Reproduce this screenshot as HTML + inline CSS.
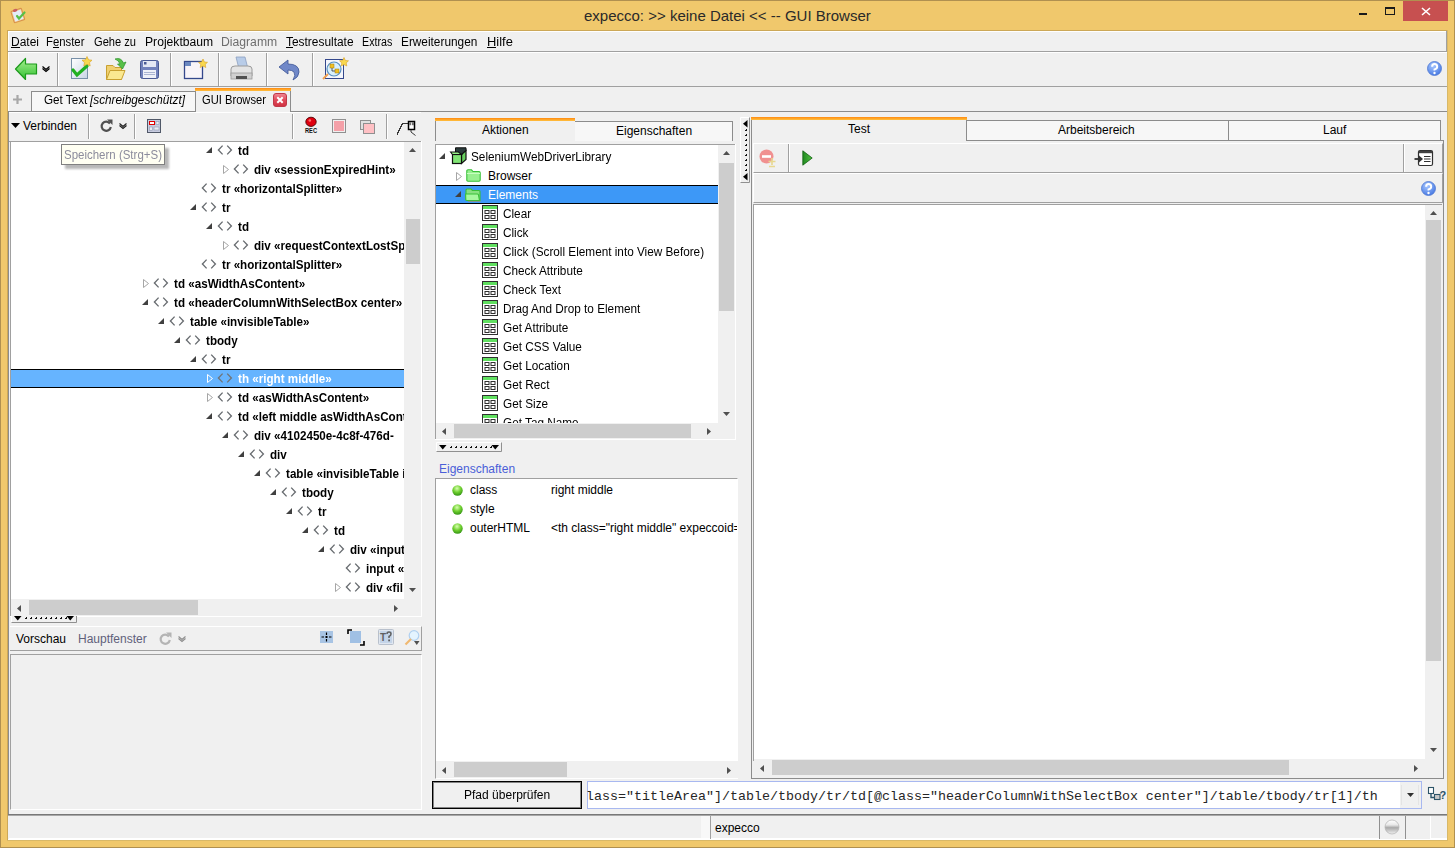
<!DOCTYPE html>
<html><head><meta charset="utf-8"><title>expecco GUI Browser</title>
<style>
html,body{margin:0;padding:0;width:1455px;height:848px;overflow:hidden;background:#f0c86c}
body{position:relative;font-family:"Liberation Sans",sans-serif;font-size:12px;color:#000}
body div, body svg{position:absolute}
.t{white-space:pre}
svg{overflow:visible}
</style></head><body>
<div style="left:0;top:0;width:1455px;height:848px;background:#f0c86c;box-shadow:inset 0 0 0 1px #b09050"></div>
<svg style="left:9px;top:6px;" width="18" height="18" viewBox="0 0 18 18">
<g transform="rotate(-18 9 10)">
<rect x="3.5" y="3.5" width="11" height="12" rx="1" fill="#f0c890" stroke="#d89048" stroke-width="1"/>
<rect x="4.8" y="4.8" width="8.5" height="9.5" fill="#e4ecf8"/>
<ellipse cx="8" cy="3.8" rx="2.3" ry="1.4" fill="#c86060"/>
</g>
<path d="M8 10 L10 12.5 L15.5 6.5" stroke="#58c048" stroke-width="2.2" fill="none" stroke-linecap="round"/>
</svg>
<div class="t" style="left:584px;top:7px;font-size:15px;line-height:18px;color:#2a2a2a">expecco: &gt;&gt; keine Datei &lt;&lt; -- GUI Browser</div>
<div style="left:1359px;top:13px;width:8px;height:2px;background:#1a1a1a"></div>
<div style="left:1385px;top:7px;width:10px;height:8px;box-sizing:border-box;border:1px solid #1a1a1a;border-top-width:2px"></div>
<div style="left:1403px;top:1px;width:45px;height:20px;background:#c75050"></div>
<svg style="left:1421px;top:7px;" width="10" height="9" viewBox="0 0 10 9"><path d="M1 1 L9 8 M9 1 L1 8" stroke="#fff" stroke-width="1.6"/></svg>
<div style="left:8px;top:31px;width:1439px;height:809px;background:#f0f0f0"></div>
<div style="left:7px;top:30px;width:1px;height:811px;background:#cca858"></div>
<div style="left:7px;top:30px;width:1441px;height:1px;background:#cca858"></div>
<div style="left:1447px;top:30px;width:1px;height:811px;background:#d8b868"></div>
<div style="left:7px;top:840px;width:1441px;height:1px;background:#d8b868"></div>
<div style="left:8px;top:31px;width:1px;height:80px;background:#ffffff"></div>
<div style="left:8px;top:111px;width:1px;height:703px;background:#8c8c8c"></div>
<div style="left:8px;top:839px;width:1439px;height:1px;background:#ffffff"></div>
<div style="left:9px;top:31px;width:1438px;height:1px;background:#ffffff"></div>
<div style="left:8px;top:51px;width:1438px;height:1px;background:#a0a0a0"></div>
<div style="left:1446px;top:31px;width:1px;height:21px;background:#a0a0a0"></div>
<div class="t" style="left:11px;top:35px;font-size:12px;line-height:15px;transform:scaleX(0.9994);transform-origin:0 0;color:#000">Datei</div>
<div style="left:11px;top:47px;width:9px;height:1px;background:#000"></div>
<div class="t" style="left:46px;top:35px;font-size:12px;line-height:15px;transform:scaleX(0.9453);transform-origin:0 0;color:#000">Fenster</div>
<div style="left:53px;top:47px;width:6px;height:1px;background:#000"></div>
<div class="t" style="left:94px;top:35px;font-size:12px;line-height:15px;transform:scaleX(0.9268);transform-origin:0 0;color:#000">Gehe zu</div>
<div class="t" style="left:145px;top:35px;font-size:12px;line-height:15px;transform:scaleX(1.0112);transform-origin:0 0;color:#000">Projektbaum</div>
<div class="t" style="left:221px;top:35px;font-size:12px;line-height:15px;transform:scaleX(1.0155);transform-origin:0 0;color:#6d6d6d">Diagramm</div>
<div class="t" style="left:286px;top:35px;font-size:12px;line-height:15px;transform:scaleX(0.9923);transform-origin:0 0;color:#000">Testresultate</div>
<div style="left:286px;top:47px;width:7px;height:1px;background:#000"></div>
<div class="t" style="left:362px;top:35px;font-size:12px;line-height:15px;transform:scaleX(0.8909);transform-origin:0 0;color:#000">Extras</div>
<div class="t" style="left:401px;top:35px;font-size:12px;line-height:15px;transform:scaleX(0.9859);transform-origin:0 0;color:#000">Erweiterungen</div>
<div class="t" style="left:487px;top:35px;font-size:12px;line-height:15px;transform:scaleX(1.0775);transform-origin:0 0;color:#000">Hilfe</div>
<div style="left:487px;top:47px;width:9px;height:1px;background:#000"></div>
<div style="left:9px;top:52px;width:1438px;height:1px;background:#ffffff"></div>
<div style="left:8px;top:86px;width:1439px;height:1px;background:#a0a0a0"></div>
<div style="left:57px;top:53px;width:1px;height:33px;background:#a0a0a0"></div>
<div style="left:58px;top:53px;width:1px;height:33px;background:#ffffff"></div>
<div style="left:170px;top:53px;width:1px;height:33px;background:#a0a0a0"></div>
<div style="left:171px;top:53px;width:1px;height:33px;background:#ffffff"></div>
<div style="left:218px;top:53px;width:1px;height:33px;background:#a0a0a0"></div>
<div style="left:219px;top:53px;width:1px;height:33px;background:#ffffff"></div>
<div style="left:266px;top:53px;width:1px;height:33px;background:#a0a0a0"></div>
<div style="left:267px;top:53px;width:1px;height:33px;background:#ffffff"></div>
<div style="left:312px;top:53px;width:1px;height:33px;background:#a0a0a0"></div>
<div style="left:313px;top:53px;width:1px;height:33px;background:#ffffff"></div>
<svg style="left:14px;top:57px;" width="24" height="24" viewBox="0 0 24 24"><defs><linearGradient id="ga" x1="0" y1="0" x2="0" y2="1"><stop offset="0" stop-color="#a8f090"/><stop offset="1" stop-color="#30c030"/></linearGradient></defs>
<path d="M1.5 12 L11.5 1.5 L11.5 7 L22.5 7 L22.5 17 L11.5 17 L11.5 22.5 Z" fill="url(#ga)" stroke="#1c9a1c" stroke-width="1.2" stroke-linejoin="round"/></svg>
<svg style="left:42px;top:66px;" width="8" height="6" viewBox="0 0 8 6"><path d="M0.5 0.5 L4 3.5 L7.5 0.5 M0.5 2.5 L4 5.5 L7.5 2.5" stroke="#000" stroke-width="1.2" fill="none"/></svg>
<svg style="left:68px;top:56px;" width="26" height="26" viewBox="0 0 26 26"><defs><linearGradient id="gd" x1="0" y1="0" x2="1" y2="1"><stop offset="0" stop-color="#ffffff"/><stop offset="1" stop-color="#c8d4e4"/></linearGradient></defs>
<rect x="3.5" y="2.5" width="16" height="20" fill="url(#gd)" stroke="#7890a8"/>
<path d="M5 14 L9 19 L19 10" stroke="#20b020" stroke-width="3.2" fill="none" stroke-linecap="round"/>
<path d="M19 0.5 L20.6 3.8 L24 4.2 L21.5 6.6 L22.2 10 L19 8.3 L15.8 10 L16.5 6.6 L14 4.2 L17.4 3.8 Z" fill="#f8d850" stroke="#d8a020" stroke-width="0.6"/></svg>
<svg style="left:104px;top:56px;" width="24" height="25" viewBox="0 0 24 25"><path d="M2.5 9.5 L9 9.5 L11 11.5 L17.5 11.5 L17.5 23.5 L2.5 23.5 Z" fill="#f0d070" stroke="#c8a030"/>
<path d="M2.5 23.5 L6 14.5 L21 14.5 L17.5 23.5 Z" fill="#fae890" stroke="#c8a030"/>
<path d="M11 3 Q17 1 19.5 7 L22 6 L18.5 13 L13.5 8 L16 8 Q15 4.5 11 3 Z" fill="#58c048" stroke="#289028" stroke-width="0.7"/></svg>
<svg style="left:139px;top:59px;" width="21" height="21" viewBox="0 0 21 21"><rect x="1.5" y="1.5" width="18" height="18" rx="2" fill="#7282bc" stroke="#4a5a94"/>
<rect x="4" y="2" width="13" height="6" fill="#e4e8f4"/><rect x="5" y="3" width="2.5" height="2.5" fill="#4a5a94"/>
<rect x="4" y="11" width="13" height="8" fill="#eef0f8"/><path d="M5 13.5h11M5 15.5h11" stroke="#98a4c8" stroke-width="0.8"/></svg>
<svg style="left:183px;top:58px;" width="26" height="22" viewBox="0 0 26 22"><rect x="1.5" y="3.5" width="18" height="17" fill="#f8f4f8" stroke="#34488c" stroke-width="1.3"/>
<rect x="2" y="4" width="6" height="4" fill="#6a88c0"/>
<path d="M20 1 L21.4 4 L24.5 4.3 L22.2 6.4 L22.8 9.5 L20 8 L17.2 9.5 L17.8 6.4 L15.5 4.3 L18.6 4 Z" fill="#f8d850" stroke="#d8a020" stroke-width="0.6"/></svg>
<svg style="left:229px;top:56px;" width="25" height="26" viewBox="0 0 25 26"><path d="M7 1 L16 1 L18.5 11 L9.5 11 Z" fill="#b8cce8" stroke="#8ca0c0" stroke-width="0.8"/>
<path d="M2 13 Q2 10 6 10 L19 10 Q23 10 23 13 L23 20 L2 20 Z" fill="#e4e4e4" stroke="#9a9a9a"/>
<rect x="2" y="17" width="21" height="6" fill="#d0d0d0" stroke="#9a9a9a" stroke-width="0.8"/>
<rect x="7" y="20" width="11" height="3" fill="#505050"/></svg>
<svg style="left:278px;top:59px;" width="23" height="22" viewBox="0 0 23 22"><path d="M1 8 L10 1 L10 5 Q21 5 21 13 Q21 18 15 21 Q18 16 16 13 Q14 11 10 11 L10 15 Z" fill="#7088c8" stroke="#3c5494" stroke-width="0.8"/></svg>
<svg style="left:322px;top:57px;" width="28" height="24" viewBox="0 0 28 24"><rect x="3.5" y="2.5" width="18" height="19" fill="#f4f6fc" stroke="#34488c"/>
<circle cx="12" cy="12" r="7" fill="#d8f0fc" stroke="#5890c0" stroke-width="1.2"/>
<rect x="8" y="7" width="4" height="4" fill="#f0c020" stroke="#a07810" stroke-width="0.5"/><rect x="13" y="12" width="4" height="4" fill="#f0c020" stroke="#a07810" stroke-width="0.5"/>
<path d="M10 11 L10 14 L13 14" stroke="#333" stroke-width="0.8" fill="none"/>
<path d="M6 17 L1 22" stroke="#f0a050" stroke-width="2"/>
<path d="M22 0.5 L23.4 3.5 L26.5 3.8 L24.2 5.9 L24.8 9 L22 7.5 L19.2 9 L19.8 5.9 L17.5 3.8 L20.6 3.5 Z" fill="#f8d850" stroke="#d8a020" stroke-width="0.6"/></svg>
<svg style="left:1427px;top:61px;" width="15" height="15" viewBox="0 0 15 15"><defs><radialGradient id="hg1427" cx="0.4" cy="0.3" r="0.8"><stop offset="0" stop-color="#a8c8ff"/><stop offset="1" stop-color="#3c70e0"/></radialGradient></defs>
<circle cx="7.5" cy="7.5" r="7.0" fill="url(#hg1427)" stroke="#5078d0" stroke-width="0.8"/>
<path d="M5.1000000000000005 5.7 Q5.1000000000000005 3.0 7.5 3.0 Q10.200000000000001 3.0 10.200000000000001 5.7 Q10.200000000000001 7.5 7.5 8.4 L7.5 9.6" stroke="#fff" stroke-width="1.9500000000000002" fill="none"/>
<circle cx="7.5" cy="12.0" r="1.2" fill="#fff"/></svg>
<svg style="left:12px;top:94px;" width="11" height="11" viewBox="0 0 11 11"><path d="M5.5 1 V10 M1 5.5 H10" stroke="#a8a8a8" stroke-width="2.2"/></svg>
<div style="left:31px;top:91px;width:165px;height:21px;background:#f7f7f7;box-sizing:border-box;border:1px solid #8c8c8c;border-bottom:none"></div>
<div class="t" style="left:44px;top:93px;font-size:12px;line-height:15px;transform:scaleX(0.9738);transform-origin:0 0;color:#000">Get Text</div>
<div class="t" style="left:90px;top:93px;font-size:12px;line-height:15px;font-style:italic;transform:scaleX(0.9822);transform-origin:0 0">[schreibgeschützt]</div>
<div style="left:8px;top:111px;width:1439px;height:1px;background:#8c8c8c"></div>
<div style="left:195px;top:88px;width:96px;height:24px;background:#f0f0f0;box-sizing:border-box;border-left:1px solid #8c8c8c;border-right:1px solid #8c8c8c"></div>
<div style="left:195px;top:88px;width:96px;height:3px;background:linear-gradient(#ff8a10,#ffc040)"></div>
<div class="t" style="left:202px;top:93px;font-size:12px;line-height:15px;transform:scaleX(0.9310);transform-origin:0 0;color:#000">GUI Browser</div>
<svg style="left:273px;top:93px;" width="14" height="14" viewBox="0 0 14 14"><defs><linearGradient id="gc" x1="0" y1="0" x2="0" y2="1"><stop offset="0" stop-color="#f08a96"/><stop offset="0.5" stop-color="#e04a5a"/><stop offset="1" stop-color="#d03040"/></linearGradient></defs>
<rect x="0.5" y="0.5" width="13" height="13" rx="2.5" fill="url(#gc)" stroke="#c03848"/>
<path d="M4.3 4.3 L9.7 9.7 M9.7 4.3 L4.3 9.7" stroke="#fff" stroke-width="2"/></svg>
<div style="left:9px;top:112px;width:412px;height:1px;background:#ffffff"></div>
<svg style="left:11px;top:123px;" width="9" height="6" viewBox="0 0 9 6"><path d="M0 0 L9 0 L4.5 5 Z" fill="#000"/></svg>
<div class="t" style="left:23px;top:119px;font-size:12px;line-height:15px;color:#000">Verbinden</div>
<div style="left:88px;top:114px;width:1px;height:25px;background:#a0a0a0"></div>
<div style="left:89px;top:114px;width:1px;height:25px;background:#ffffff"></div>
<div style="left:134px;top:114px;width:1px;height:25px;background:#a0a0a0"></div>
<div style="left:135px;top:114px;width:1px;height:25px;background:#ffffff"></div>
<div style="left:292px;top:114px;width:1px;height:25px;background:#a0a0a0"></div>
<div style="left:293px;top:114px;width:1px;height:25px;background:#ffffff"></div>
<div style="left:386px;top:114px;width:1px;height:25px;background:#a0a0a0"></div>
<div style="left:387px;top:114px;width:1px;height:25px;background:#ffffff"></div>
<svg style="left:100px;top:119px;" width="13" height="13" viewBox="0 0 13 13"><path d="M10 4.5 A4.6 4.6 0 1 0 10.8 8" stroke="#505050" stroke-width="2.2" fill="none"/><path d="M7 0.5 L12.5 0.5 L12.5 6 Z" fill="#505050"/></svg>
<svg style="left:119px;top:123px;" width="8" height="6" viewBox="0 0 8 6"><path d="M0.5 0.5 L4 3.5 L7.5 0.5 M0.5 2.5 L4 5.5 L7.5 2.5" stroke="#222" stroke-width="1.2" fill="none"/></svg>
<svg style="left:147px;top:119px;" width="14" height="14" viewBox="0 0 14 14"><rect x="0.5" y="0.5" width="13" height="13" fill="#c8cce0" stroke="#505868"/><rect x="2.5" y="2.5" width="5" height="3" fill="#fff" stroke="#e00000"/><rect x="9" y="2.5" width="3" height="3" fill="#e8ecf4" stroke="#9098b0" stroke-width="0.6"/><rect x="2.5" y="8" width="3" height="3.5" fill="#e8ecf4" stroke="#9098b0" stroke-width="0.6"/><rect x="7" y="8" width="5" height="3" fill="#e8ecf4" stroke="#9098b0" stroke-width="0.6"/></svg>
<svg style="left:303px;top:116px;" width="16" height="19" viewBox="0 0 16 19"><ellipse cx="8" cy="5.8" rx="5.2" ry="4.6" fill="#e00010" stroke="#500000" stroke-width="0.9"/><circle cx="6.8" cy="4.5" r="1.3" fill="#ff7070"/><text x="8" y="17" font-family="Liberation Sans" font-weight="bold" font-size="6.5" text-anchor="middle" fill="#101010" textLength="12" lengthAdjust="spacingAndGlyphs">REC</text></svg>
<svg style="left:332px;top:119px;" width="14" height="14" viewBox="0 0 14 14"><rect x="0.5" y="0.5" width="13" height="13" fill="#f0f0f0" stroke="#909090"/><rect x="2" y="2" width="10" height="10" fill="#f4a0a8"/></svg>
<svg style="left:360px;top:120px;" width="15" height="14" viewBox="0 0 15 14"><rect x="0.5" y="0.5" width="10" height="9" fill="#e0e0e0" stroke="#909090"/><rect x="3.5" y="3.5" width="11" height="10" fill="#ffc0c4" stroke="#909090"/></svg>
<svg style="left:396px;top:120px;" width="21" height="17" viewBox="0 0 21 17"><g shape-rendering="crispEdges" fill="#383838"><rect x="1" y="12" width="1" height="3"/><rect x="1" y="12" width="2" height="1"/><rect x="2" y="10" width="1" height="3"/><rect x="2" y="10" width="2" height="1"/><rect x="3" y="8" width="1" height="2"/><rect x="3" y="8" width="2" height="1"/><rect x="4" y="6" width="1" height="3"/><rect x="4" y="6" width="2" height="1"/><rect x="5" y="4" width="1" height="2"/><rect x="5" y="4" width="2" height="1"/><rect x="6" y="3" width="6" height="1"/></g><rect x="12.5" y="1.5" width="6" height="8" fill="#fff" stroke="#000" stroke-width="1.5"/><rect x="13.2" y="2.2" width="2" height="3" fill="#707070"/><rect x="16" y="2.2" width="2" height="3" fill="#707070"/><path d="M15 10 L15 12 L19.5 15.5" stroke="#383838" fill="none"/></svg>
<div style="left:9px;top:141px;width:412px;height:1px;background:#a0a0a0"></div>
<div style="left:10px;top:141px;width:1px;height:475px;background:#a0a0a0"></div>
<div style="left:11px;top:142px;width:393px;height:457px;background:#fff"></div>
<div style="left:11px;top:142px;width:393px;height:457px;overflow:hidden">
<svg style="left:195px;top:5px;" width="6" height="6" viewBox="0 0 6 6"><path d="M6 0 L6 6 L0 6 Z" fill="#404040"/></svg>
<svg style="left:206px;top:3px;" width="15" height="11" viewBox="0 0 15 11"><path d="M5.6 0.6 L1.4 5 L5.6 9.4 M10.2 0.6 L14.4 5 L10.2 9.4" stroke="#686c70" stroke-width="1.35" fill="none"/></svg>
<div class="t" style="left:227px;top:2px;font-size:12px;line-height:15px;font-weight:bold;color:#000;transform:scaleX(0.97);transform-origin:0 0">td</div>
<svg style="left:212px;top:23px;" width="6" height="9" viewBox="0 0 6 9"><path d="M0.5 0.5 L5.5 4.5 L0.5 8.5 Z" fill="none" stroke="#a6a6a6" stroke-width="1"/></svg>
<svg style="left:222px;top:22px;" width="15" height="11" viewBox="0 0 15 11"><path d="M5.6 0.6 L1.4 5 L5.6 9.4 M10.2 0.6 L14.4 5 L10.2 9.4" stroke="#686c70" stroke-width="1.35" fill="none"/></svg>
<div class="t" style="left:243px;top:21px;font-size:12px;line-height:15px;font-weight:bold;color:#000;transform:scaleX(0.97);transform-origin:0 0">div «sessionExpiredHint»</div>
<svg style="left:190px;top:41px;" width="15" height="11" viewBox="0 0 15 11"><path d="M5.6 0.6 L1.4 5 L5.6 9.4 M10.2 0.6 L14.4 5 L10.2 9.4" stroke="#686c70" stroke-width="1.35" fill="none"/></svg>
<div class="t" style="left:211px;top:40px;font-size:12px;line-height:15px;font-weight:bold;color:#000;transform:scaleX(0.97);transform-origin:0 0">tr «horizontalSplitter»</div>
<svg style="left:179px;top:62px;" width="6" height="6" viewBox="0 0 6 6"><path d="M6 0 L6 6 L0 6 Z" fill="#404040"/></svg>
<svg style="left:190px;top:60px;" width="15" height="11" viewBox="0 0 15 11"><path d="M5.6 0.6 L1.4 5 L5.6 9.4 M10.2 0.6 L14.4 5 L10.2 9.4" stroke="#686c70" stroke-width="1.35" fill="none"/></svg>
<div class="t" style="left:211px;top:59px;font-size:12px;line-height:15px;font-weight:bold;color:#000;transform:scaleX(0.97);transform-origin:0 0">tr</div>
<svg style="left:195px;top:81px;" width="6" height="6" viewBox="0 0 6 6"><path d="M6 0 L6 6 L0 6 Z" fill="#404040"/></svg>
<svg style="left:206px;top:79px;" width="15" height="11" viewBox="0 0 15 11"><path d="M5.6 0.6 L1.4 5 L5.6 9.4 M10.2 0.6 L14.4 5 L10.2 9.4" stroke="#686c70" stroke-width="1.35" fill="none"/></svg>
<div class="t" style="left:227px;top:78px;font-size:12px;line-height:15px;font-weight:bold;color:#000;transform:scaleX(0.97);transform-origin:0 0">td</div>
<svg style="left:212px;top:99px;" width="6" height="9" viewBox="0 0 6 9"><path d="M0.5 0.5 L5.5 4.5 L0.5 8.5 Z" fill="none" stroke="#a6a6a6" stroke-width="1"/></svg>
<svg style="left:222px;top:98px;" width="15" height="11" viewBox="0 0 15 11"><path d="M5.6 0.6 L1.4 5 L5.6 9.4 M10.2 0.6 L14.4 5 L10.2 9.4" stroke="#686c70" stroke-width="1.35" fill="none"/></svg>
<div class="t" style="left:243px;top:97px;font-size:12px;line-height:15px;font-weight:bold;color:#000;transform:scaleX(0.97);transform-origin:0 0">div «requestContextLostSpacer»</div>
<svg style="left:190px;top:117px;" width="15" height="11" viewBox="0 0 15 11"><path d="M5.6 0.6 L1.4 5 L5.6 9.4 M10.2 0.6 L14.4 5 L10.2 9.4" stroke="#686c70" stroke-width="1.35" fill="none"/></svg>
<div class="t" style="left:211px;top:116px;font-size:12px;line-height:15px;font-weight:bold;color:#000;transform:scaleX(0.97);transform-origin:0 0">tr «horizontalSplitter»</div>
<svg style="left:132px;top:137px;" width="6" height="9" viewBox="0 0 6 9"><path d="M0.5 0.5 L5.5 4.5 L0.5 8.5 Z" fill="none" stroke="#a6a6a6" stroke-width="1"/></svg>
<svg style="left:142px;top:136px;" width="15" height="11" viewBox="0 0 15 11"><path d="M5.6 0.6 L1.4 5 L5.6 9.4 M10.2 0.6 L14.4 5 L10.2 9.4" stroke="#686c70" stroke-width="1.35" fill="none"/></svg>
<div class="t" style="left:163px;top:135px;font-size:12px;line-height:15px;font-weight:bold;color:#000;transform:scaleX(0.97);transform-origin:0 0">td «asWidthAsContent»</div>
<svg style="left:131px;top:157px;" width="6" height="6" viewBox="0 0 6 6"><path d="M6 0 L6 6 L0 6 Z" fill="#404040"/></svg>
<svg style="left:142px;top:155px;" width="15" height="11" viewBox="0 0 15 11"><path d="M5.6 0.6 L1.4 5 L5.6 9.4 M10.2 0.6 L14.4 5 L10.2 9.4" stroke="#686c70" stroke-width="1.35" fill="none"/></svg>
<div class="t" style="left:163px;top:154px;font-size:12px;line-height:15px;font-weight:bold;color:#000;transform:scaleX(0.97);transform-origin:0 0">td «headerColumnWithSelectBox center»</div>
<svg style="left:147px;top:176px;" width="6" height="6" viewBox="0 0 6 6"><path d="M6 0 L6 6 L0 6 Z" fill="#404040"/></svg>
<svg style="left:158px;top:174px;" width="15" height="11" viewBox="0 0 15 11"><path d="M5.6 0.6 L1.4 5 L5.6 9.4 M10.2 0.6 L14.4 5 L10.2 9.4" stroke="#686c70" stroke-width="1.35" fill="none"/></svg>
<div class="t" style="left:179px;top:173px;font-size:12px;line-height:15px;font-weight:bold;color:#000;transform:scaleX(0.97);transform-origin:0 0">table «invisibleTable»</div>
<svg style="left:163px;top:195px;" width="6" height="6" viewBox="0 0 6 6"><path d="M6 0 L6 6 L0 6 Z" fill="#404040"/></svg>
<svg style="left:174px;top:193px;" width="15" height="11" viewBox="0 0 15 11"><path d="M5.6 0.6 L1.4 5 L5.6 9.4 M10.2 0.6 L14.4 5 L10.2 9.4" stroke="#686c70" stroke-width="1.35" fill="none"/></svg>
<div class="t" style="left:195px;top:192px;font-size:12px;line-height:15px;font-weight:bold;color:#000;transform:scaleX(0.97);transform-origin:0 0">tbody</div>
<svg style="left:179px;top:214px;" width="6" height="6" viewBox="0 0 6 6"><path d="M6 0 L6 6 L0 6 Z" fill="#404040"/></svg>
<svg style="left:190px;top:212px;" width="15" height="11" viewBox="0 0 15 11"><path d="M5.6 0.6 L1.4 5 L5.6 9.4 M10.2 0.6 L14.4 5 L10.2 9.4" stroke="#686c70" stroke-width="1.35" fill="none"/></svg>
<div class="t" style="left:211px;top:211px;font-size:12px;line-height:15px;font-weight:bold;color:#000;transform:scaleX(0.97);transform-origin:0 0">tr</div>
<div style="left:0px;top:227px;width:393px;height:19px;background:#66b4ff;box-sizing:border-box;border-top:1px solid #000;border-bottom:1px solid #000"></div>
<svg style="left:196px;top:232px;" width="6" height="9" viewBox="0 0 6 9"><path d="M0.5 0.5 L5.5 4.5 L0.5 8.5 Z" fill="none" stroke="#ffffff" stroke-width="1"/></svg>
<svg style="left:206px;top:231px;" width="15" height="11" viewBox="0 0 15 11"><path d="M5.6 0.6 L1.4 5 L5.6 9.4 M10.2 0.6 L14.4 5 L10.2 9.4" stroke="#707478" stroke-width="1.35" fill="none"/></svg>
<div class="t" style="left:227px;top:230px;font-size:12px;line-height:15px;font-weight:bold;color:#fff;transform:scaleX(0.97);transform-origin:0 0">th «right middle»</div>
<svg style="left:196px;top:251px;" width="6" height="9" viewBox="0 0 6 9"><path d="M0.5 0.5 L5.5 4.5 L0.5 8.5 Z" fill="none" stroke="#a6a6a6" stroke-width="1"/></svg>
<svg style="left:206px;top:250px;" width="15" height="11" viewBox="0 0 15 11"><path d="M5.6 0.6 L1.4 5 L5.6 9.4 M10.2 0.6 L14.4 5 L10.2 9.4" stroke="#686c70" stroke-width="1.35" fill="none"/></svg>
<div class="t" style="left:227px;top:249px;font-size:12px;line-height:15px;font-weight:bold;color:#000;transform:scaleX(0.97);transform-origin:0 0">td «asWidthAsContent»</div>
<svg style="left:195px;top:271px;" width="6" height="6" viewBox="0 0 6 6"><path d="M6 0 L6 6 L0 6 Z" fill="#404040"/></svg>
<svg style="left:206px;top:269px;" width="15" height="11" viewBox="0 0 15 11"><path d="M5.6 0.6 L1.4 5 L5.6 9.4 M10.2 0.6 L14.4 5 L10.2 9.4" stroke="#686c70" stroke-width="1.35" fill="none"/></svg>
<div class="t" style="left:227px;top:268px;font-size:12px;line-height:15px;font-weight:bold;color:#000;transform:scaleX(0.97);transform-origin:0 0">td «left middle asWidthAsContent»</div>
<svg style="left:211px;top:290px;" width="6" height="6" viewBox="0 0 6 6"><path d="M6 0 L6 6 L0 6 Z" fill="#404040"/></svg>
<svg style="left:222px;top:288px;" width="15" height="11" viewBox="0 0 15 11"><path d="M5.6 0.6 L1.4 5 L5.6 9.4 M10.2 0.6 L14.4 5 L10.2 9.4" stroke="#686c70" stroke-width="1.35" fill="none"/></svg>
<div class="t" style="left:243px;top:287px;font-size:12px;line-height:15px;font-weight:bold;color:#000;transform:scaleX(0.97);transform-origin:0 0">div «4102450e-4c8f-476d-</div>
<svg style="left:227px;top:309px;" width="6" height="6" viewBox="0 0 6 6"><path d="M6 0 L6 6 L0 6 Z" fill="#404040"/></svg>
<svg style="left:238px;top:307px;" width="15" height="11" viewBox="0 0 15 11"><path d="M5.6 0.6 L1.4 5 L5.6 9.4 M10.2 0.6 L14.4 5 L10.2 9.4" stroke="#686c70" stroke-width="1.35" fill="none"/></svg>
<div class="t" style="left:259px;top:306px;font-size:12px;line-height:15px;font-weight:bold;color:#000;transform:scaleX(0.97);transform-origin:0 0">div</div>
<svg style="left:243px;top:328px;" width="6" height="6" viewBox="0 0 6 6"><path d="M6 0 L6 6 L0 6 Z" fill="#404040"/></svg>
<svg style="left:254px;top:326px;" width="15" height="11" viewBox="0 0 15 11"><path d="M5.6 0.6 L1.4 5 L5.6 9.4 M10.2 0.6 L14.4 5 L10.2 9.4" stroke="#686c70" stroke-width="1.35" fill="none"/></svg>
<div class="t" style="left:275px;top:325px;font-size:12px;line-height:15px;font-weight:bold;color:#000;transform:scaleX(0.97);transform-origin:0 0">table «invisibleTable inputTable»</div>
<svg style="left:259px;top:347px;" width="6" height="6" viewBox="0 0 6 6"><path d="M6 0 L6 6 L0 6 Z" fill="#404040"/></svg>
<svg style="left:270px;top:345px;" width="15" height="11" viewBox="0 0 15 11"><path d="M5.6 0.6 L1.4 5 L5.6 9.4 M10.2 0.6 L14.4 5 L10.2 9.4" stroke="#686c70" stroke-width="1.35" fill="none"/></svg>
<div class="t" style="left:291px;top:344px;font-size:12px;line-height:15px;font-weight:bold;color:#000;transform:scaleX(0.97);transform-origin:0 0">tbody</div>
<svg style="left:275px;top:366px;" width="6" height="6" viewBox="0 0 6 6"><path d="M6 0 L6 6 L0 6 Z" fill="#404040"/></svg>
<svg style="left:286px;top:364px;" width="15" height="11" viewBox="0 0 15 11"><path d="M5.6 0.6 L1.4 5 L5.6 9.4 M10.2 0.6 L14.4 5 L10.2 9.4" stroke="#686c70" stroke-width="1.35" fill="none"/></svg>
<div class="t" style="left:307px;top:363px;font-size:12px;line-height:15px;font-weight:bold;color:#000;transform:scaleX(0.97);transform-origin:0 0">tr</div>
<svg style="left:291px;top:385px;" width="6" height="6" viewBox="0 0 6 6"><path d="M6 0 L6 6 L0 6 Z" fill="#404040"/></svg>
<svg style="left:302px;top:383px;" width="15" height="11" viewBox="0 0 15 11"><path d="M5.6 0.6 L1.4 5 L5.6 9.4 M10.2 0.6 L14.4 5 L10.2 9.4" stroke="#686c70" stroke-width="1.35" fill="none"/></svg>
<div class="t" style="left:323px;top:382px;font-size:12px;line-height:15px;font-weight:bold;color:#000;transform:scaleX(0.97);transform-origin:0 0">td</div>
<svg style="left:307px;top:404px;" width="6" height="6" viewBox="0 0 6 6"><path d="M6 0 L6 6 L0 6 Z" fill="#404040"/></svg>
<svg style="left:318px;top:402px;" width="15" height="11" viewBox="0 0 15 11"><path d="M5.6 0.6 L1.4 5 L5.6 9.4 M10.2 0.6 L14.4 5 L10.2 9.4" stroke="#686c70" stroke-width="1.35" fill="none"/></svg>
<div class="t" style="left:339px;top:401px;font-size:12px;line-height:15px;font-weight:bold;color:#000;transform:scaleX(0.97);transform-origin:0 0">div «inputField»</div>
<svg style="left:334px;top:421px;" width="15" height="11" viewBox="0 0 15 11"><path d="M5.6 0.6 L1.4 5 L5.6 9.4 M10.2 0.6 L14.4 5 L10.2 9.4" stroke="#686c70" stroke-width="1.35" fill="none"/></svg>
<div class="t" style="left:355px;top:420px;font-size:12px;line-height:15px;font-weight:bold;color:#000;transform:scaleX(0.97);transform-origin:0 0">input «inputFieldText»</div>
<svg style="left:324px;top:441px;" width="6" height="9" viewBox="0 0 6 9"><path d="M0.5 0.5 L5.5 4.5 L0.5 8.5 Z" fill="none" stroke="#a6a6a6" stroke-width="1"/></svg>
<svg style="left:334px;top:440px;" width="15" height="11" viewBox="0 0 15 11"><path d="M5.6 0.6 L1.4 5 L5.6 9.4 M10.2 0.6 L14.4 5 L10.2 9.4" stroke="#686c70" stroke-width="1.35" fill="none"/></svg>
<div class="t" style="left:355px;top:439px;font-size:12px;line-height:15px;font-weight:bold;color:#000;transform:scaleX(0.97);transform-origin:0 0">div «fil</div>
</div>
<div style="left:405px;top:142px;width:16px;height:457px;background:#f0f0f0"></div>
<div style="left:406px;top:219px;width:14px;height:45px;background:#cdcdcd"></div>
<svg style="left:409px;top:148px;" width="7" height="4" viewBox="0 0 7 4"><path d="M0 4 L3.5 0 L7 4 Z" fill="#505050"/></svg>
<svg style="left:409px;top:588px;" width="7" height="4" viewBox="0 0 7 4"><path d="M0 0 L7 0 L3.5 4 Z" fill="#505050"/></svg>
<div style="left:11px;top:599px;width:394px;height:17px;background:#f0f0f0"></div>
<div style="left:29px;top:600px;width:169px;height:15px;background:#cdcdcd"></div>
<svg style="left:17px;top:605px;" width="4" height="7" viewBox="0 0 4 7"><path d="M4 0 L4 7 L0 3.5 Z" fill="#505050"/></svg>
<svg style="left:394px;top:605px;" width="4" height="7" viewBox="0 0 4 7"><path d="M0 0 L4 3.5 L0 7 Z" fill="#505050"/></svg>
<div style="left:405px;top:599px;width:16px;height:17px;background:#f0f0f0"></div>
<div style="left:421px;top:141px;width:1px;height:476px;background:#ffffff"></div>
<div style="left:10px;top:616px;width:412px;height:1px;background:#ffffff"></div>
<div style="left:65px;top:148px;width:104px;height:21px;background:rgba(0,0,0,0.28);filter:blur(1px)"></div>
<div style="left:61px;top:144px;width:104px;height:21px;background:#fffff2;box-sizing:border-box;border:1px solid #808080"></div>
<div class="t" style="left:64px;top:148px;font-size:12px;line-height:15px;transform:scaleX(0.9568);transform-origin:0 0;color:#8c8c9c">Speichern (Strg+S)</div>
<svg style="left:11px;top:613px;clip-path:inset(3px 0 0 0)" width="66" height="10" viewBox="0 0 66 10"><rect x="0" y="0" width="66" height="10" fill="#f0f0f0"/><path d="M0.5 9.5 V0.5 H65.5" stroke="#ffffff" fill="none"/><path d="M0.5 9.5 H65.5 V0.5" stroke="#909090" fill="none"/><path d="M16 4 V6 H14" fill="#111" stroke="none"/><rect x="14" y="5" width="2" height="1" fill="#111"/><rect x="15" y="4" width="1" height="1" fill="#111"/><path d="M21 4 V6 H19" fill="#111" stroke="none"/><rect x="19" y="5" width="2" height="1" fill="#111"/><rect x="20" y="4" width="1" height="1" fill="#111"/><path d="M26 4 V6 H24" fill="#111" stroke="none"/><rect x="24" y="5" width="2" height="1" fill="#111"/><rect x="25" y="4" width="1" height="1" fill="#111"/><path d="M31 4 V6 H29" fill="#111" stroke="none"/><rect x="29" y="5" width="2" height="1" fill="#111"/><rect x="30" y="4" width="1" height="1" fill="#111"/><path d="M36 4 V6 H34" fill="#111" stroke="none"/><rect x="34" y="5" width="2" height="1" fill="#111"/><rect x="35" y="4" width="1" height="1" fill="#111"/><path d="M41 4 V6 H39" fill="#111" stroke="none"/><rect x="39" y="5" width="2" height="1" fill="#111"/><rect x="40" y="4" width="1" height="1" fill="#111"/><path d="M46 4 V6 H44" fill="#111" stroke="none"/><rect x="44" y="5" width="2" height="1" fill="#111"/><rect x="45" y="4" width="1" height="1" fill="#111"/><path d="M51 4 V6 H49" fill="#111" stroke="none"/><rect x="49" y="5" width="2" height="1" fill="#111"/><rect x="50" y="4" width="1" height="1" fill="#111"/><path d="M56 4 V6 H54" fill="#111" stroke="none"/><rect x="54" y="5" width="2" height="1" fill="#111"/><rect x="55" y="4" width="1" height="1" fill="#111"/><path d="M3 3 L10.5 3 L6.75 7.5 Z" fill="#000"/><path d="M55.5 3 L63 3 L59.25 7.5 Z" fill="#000"/></svg>
<div style="left:10px;top:626px;width:412px;height:25px;box-sizing:border-box;border-top:1px solid #fff;border-right:1px solid #a0a0a0;border-bottom:1px solid #a0a0a0"></div>
<div class="t" style="left:16px;top:632px;font-size:12px;line-height:15px;color:#000">Vorschau</div>
<div class="t" style="left:78px;top:632px;font-size:12px;line-height:15px;color:#60607a">Hauptfenster</div>
<svg style="left:159px;top:632px;" width="13" height="13" viewBox="0 0 13 13"><path d="M10 4.5 A4.6 4.6 0 1 0 10.8 8" stroke="#b4b4b4" stroke-width="2.2" fill="none"/><path d="M7 0.5 L12.5 0.5 L12.5 6 Z" fill="#b4b4b4"/></svg>
<svg style="left:178px;top:636px;" width="8" height="6" viewBox="0 0 8 6"><path d="M0.5 0.5 L4 3.5 L7.5 0.5 M0.5 2.5 L4 5.5 L7.5 2.5" stroke="#909090" stroke-width="1.2" fill="none"/></svg>
<svg style="left:320px;top:631px;" width="13" height="13" viewBox="0 0 13 13"><rect x="0" y="0" width="13" height="12" fill="#a8c4e4"/><path d="M6.5 1.5 V4 M6.5 8 V10.5 M1.5 6 H4 M9 6 H11.5" stroke="#000" stroke-width="1.2"/><rect x="5.5" y="5" width="2" height="2" fill="#000"/></svg>
<svg style="left:347px;top:629px;" width="18" height="17" viewBox="0 0 18 17"><rect x="3" y="2" width="11" height="12" fill="#a0c0e4"/><path d="M1 5 V1 H5 M13 16 H17 V12" stroke="#000" stroke-width="1.6" fill="none"/></svg>
<svg style="left:378px;top:629px;" width="16" height="16" viewBox="0 0 16 16"><rect x="0.5" y="0.5" width="15" height="15" rx="1" fill="#dfe6f0" stroke="#b8c0cc"/><rect x="2" y="2" width="12" height="12" fill="#c4d4e8"/><text x="2" y="12" font-family="Liberation Sans" font-weight="bold" font-size="10" fill="#606060">T</text><path d="M9 5 Q9 3 11 3 Q13 3 13 5 Q13 6.5 11 7.5 V9" stroke="#606060" stroke-width="1.5" fill="none"/><rect x="10.2" y="10.5" width="1.8" height="1.8" fill="#606060"/></svg>
<svg style="left:404px;top:630px;" width="16" height="16" viewBox="0 0 16 16"><circle cx="10" cy="5.5" r="4.8" fill="#e4f4ff" stroke="#b0d0f0" stroke-width="1.2"/><path d="M7 9 L1.5 14.5" stroke="#f0b870" stroke-width="2.2"/><path d="M10 11 H15.5 L12.75 15 Z" fill="#505050"/></svg>
<div style="left:10px;top:654px;width:412px;height:156px;box-sizing:border-box;border-top:1px solid #a0a0a0;border-left:1px solid #a0a0a0;border-right:1px solid #fff;border-bottom:1px solid #fff"></div>
<div style="left:574px;top:121px;width:159px;height:20px;background:#f7f7f7;box-sizing:border-box;border:1px solid #8c8c8c;border-bottom:none"></div>
<div class="t" style="left:616px;top:124px;font-size:12px;line-height:15px;color:#000">Eigenschaften</div>
<div style="left:435px;top:118px;width:140px;height:23px;background:#f0f0f0;box-sizing:border-box;border-left:1px solid #8c8c8c"></div>
<div style="left:435px;top:118px;width:140px;height:3px;background:linear-gradient(#ff8a10,#ffc040)"></div>
<div class="t" style="left:482px;top:123px;font-size:12px;line-height:15px;color:#000">Aktionen</div>
<div style="left:435px;top:144px;width:301px;height:296px;box-sizing:border-box;border-top:1px solid #a0a0a0;border-left:1px solid #a0a0a0"></div>
<div style="left:436px;top:145px;width:282px;height:278px;background:#fff"></div>
<div style="left:735px;top:144px;width:1px;height:296px;background:#ffffff"></div>
<div style="left:435px;top:439px;width:301px;height:1px;background:#ffffff"></div>
<div style="left:436px;top:145px;width:282px;height:278px;overflow:hidden">
<svg style="left:3px;top:8px;" width="6" height="6" viewBox="0 0 6 6"><path d="M6 0 L6 6 L0 6 Z" fill="#404040"/></svg>
<svg style="left:14px;top:2px;" width="17" height="17" viewBox="0 0 17 17"><path d="M5.5 0.8 L16 0.8 L16 4 L12 7.5 L5.5 7.5 Z" fill="#2c3c3c" stroke="#101010" stroke-width="1"/><path d="M11.5 7.5 L16 3.5 L16 12.5 L11.5 16.5 Z" fill="#68d060" stroke="#101010" stroke-width="1.2"/><rect x="2.5" y="7.5" width="9" height="9" fill="#80e474" stroke="#101010" stroke-width="1.2"/><path d="M0.6 5 L8.5 5 L11.5 7.5 L2.5 7.5 Z" fill="#98f088" stroke="#101010" stroke-width="1.1"/></svg>
<div class="t" style="left:35px;top:5px;font-size:12px;line-height:15px;color:#000;transform:scaleX(0.98);transform-origin:0 0">SeleniumWebDriverLibrary</div>
<svg style="left:20px;top:27px;" width="6" height="9" viewBox="0 0 6 9"><path d="M0.5 0.5 L5.5 4.5 L0.5 8.5 Z" fill="none" stroke="#a6a6a6" stroke-width="1"/></svg>
<svg style="left:30px;top:24px;" width="15" height="13" viewBox="0 0 15 13"><path d="M0.8 2 Q0.8 0.8 2 0.8 L5.5 0.8 L7 2.5 L13 2.5 Q14.2 2.5 14.2 3.7 L14.2 11 Q14.2 12.2 13 12.2 L2 12.2 Q0.8 12.2 0.8 11 Z" fill="#98f090" stroke="#38c038" stroke-width="1.1"/><path d="M1 4.5 H14" stroke="#c8ffc0" stroke-width="1"/></svg>
<div class="t" style="left:52px;top:24px;font-size:12px;line-height:15px;color:#000">Browser</div>
<div style="left:0px;top:40px;width:282px;height:19px;background:#3d98f7;box-sizing:border-box;border-top:1px solid #000;border-bottom:1px solid #000"></div>
<svg style="left:19px;top:46px;" width="6" height="6" viewBox="0 0 6 6"><path d="M6 0 L6 6 L0 6 Z" fill="#404040"/></svg>
<svg style="left:29px;top:43px;" width="17" height="14" viewBox="0 0 17 14"><path d="M1 2 Q1 1 2 1 L6 1 L7.5 2.5 L14 2.5 Q15 2.5 15 3.5 L15 12.5 L2 12.5 Q1 12.5 1 11.5 Z" fill="#88e080" stroke="#38c038" stroke-width="1.1"/><path d="M0.6 6 L12.5 6 Q13.5 6 13.5 7 L14.5 12.5 L2 12.5 Q1 12.5 0.8 11.5 Z" fill="#a8f8a0" stroke="#38c038" stroke-width="1.1"/><path d="M3 13.4 H15.5" stroke="#a09070" stroke-width="0.8"/></svg>
<div class="t" style="left:52px;top:43px;font-size:12px;line-height:15px;color:#fff">Elements</div>
<svg style="left:46px;top:60px;" width="16" height="16" viewBox="0 0 16 16"><rect x="0.5" y="0.5" width="15" height="15" fill="#fff" stroke="#303030"/><rect x="1" y="1" width="14" height="3" fill="#60e060"/><rect x="3" y="5.5" width="4" height="3" fill="none" stroke="#303030"/><rect x="9" y="5.5" width="4" height="3" fill="none" stroke="#303030"/><rect x="3" y="10.5" width="4" height="3" fill="none" stroke="#303030"/><rect x="9" y="10.5" width="4" height="3" fill="none" stroke="#303030"/></svg>
<div class="t" style="left:67px;top:62px;font-size:12px;line-height:15px;color:#000;transform:scaleX(0.98);transform-origin:0 0">Clear</div>
<svg style="left:46px;top:79px;" width="16" height="16" viewBox="0 0 16 16"><rect x="0.5" y="0.5" width="15" height="15" fill="#fff" stroke="#303030"/><rect x="1" y="1" width="14" height="3" fill="#60e060"/><rect x="3" y="5.5" width="4" height="3" fill="none" stroke="#303030"/><rect x="9" y="5.5" width="4" height="3" fill="none" stroke="#303030"/><rect x="3" y="10.5" width="4" height="3" fill="none" stroke="#303030"/><rect x="9" y="10.5" width="4" height="3" fill="none" stroke="#303030"/></svg>
<div class="t" style="left:67px;top:81px;font-size:12px;line-height:15px;color:#000;transform:scaleX(0.98);transform-origin:0 0">Click</div>
<svg style="left:46px;top:98px;" width="16" height="16" viewBox="0 0 16 16"><rect x="0.5" y="0.5" width="15" height="15" fill="#fff" stroke="#303030"/><rect x="1" y="1" width="14" height="3" fill="#60e060"/><rect x="3" y="5.5" width="4" height="3" fill="none" stroke="#303030"/><rect x="9" y="5.5" width="4" height="3" fill="none" stroke="#303030"/><rect x="3" y="10.5" width="4" height="3" fill="none" stroke="#303030"/><rect x="9" y="10.5" width="4" height="3" fill="none" stroke="#303030"/></svg>
<div class="t" style="left:67px;top:100px;font-size:12px;line-height:15px;color:#000;transform:scaleX(0.98);transform-origin:0 0">Click (Scroll Element into View Before)</div>
<svg style="left:46px;top:117px;" width="16" height="16" viewBox="0 0 16 16"><rect x="0.5" y="0.5" width="15" height="15" fill="#fff" stroke="#303030"/><rect x="1" y="1" width="14" height="3" fill="#60e060"/><rect x="3" y="5.5" width="4" height="3" fill="none" stroke="#303030"/><rect x="9" y="5.5" width="4" height="3" fill="none" stroke="#303030"/><rect x="3" y="10.5" width="4" height="3" fill="none" stroke="#303030"/><rect x="9" y="10.5" width="4" height="3" fill="none" stroke="#303030"/></svg>
<div class="t" style="left:67px;top:119px;font-size:12px;line-height:15px;color:#000;transform:scaleX(0.98);transform-origin:0 0">Check Attribute</div>
<svg style="left:46px;top:136px;" width="16" height="16" viewBox="0 0 16 16"><rect x="0.5" y="0.5" width="15" height="15" fill="#fff" stroke="#303030"/><rect x="1" y="1" width="14" height="3" fill="#60e060"/><rect x="3" y="5.5" width="4" height="3" fill="none" stroke="#303030"/><rect x="9" y="5.5" width="4" height="3" fill="none" stroke="#303030"/><rect x="3" y="10.5" width="4" height="3" fill="none" stroke="#303030"/><rect x="9" y="10.5" width="4" height="3" fill="none" stroke="#303030"/></svg>
<div class="t" style="left:67px;top:138px;font-size:12px;line-height:15px;color:#000;transform:scaleX(0.98);transform-origin:0 0">Check Text</div>
<svg style="left:46px;top:155px;" width="16" height="16" viewBox="0 0 16 16"><rect x="0.5" y="0.5" width="15" height="15" fill="#fff" stroke="#303030"/><rect x="1" y="1" width="14" height="3" fill="#60e060"/><rect x="3" y="5.5" width="4" height="3" fill="none" stroke="#303030"/><rect x="9" y="5.5" width="4" height="3" fill="none" stroke="#303030"/><rect x="3" y="10.5" width="4" height="3" fill="none" stroke="#303030"/><rect x="9" y="10.5" width="4" height="3" fill="none" stroke="#303030"/></svg>
<div class="t" style="left:67px;top:157px;font-size:12px;line-height:15px;color:#000;transform:scaleX(0.98);transform-origin:0 0">Drag And Drop to Element</div>
<svg style="left:46px;top:174px;" width="16" height="16" viewBox="0 0 16 16"><rect x="0.5" y="0.5" width="15" height="15" fill="#fff" stroke="#303030"/><rect x="1" y="1" width="14" height="3" fill="#60e060"/><rect x="3" y="5.5" width="4" height="3" fill="none" stroke="#303030"/><rect x="9" y="5.5" width="4" height="3" fill="none" stroke="#303030"/><rect x="3" y="10.5" width="4" height="3" fill="none" stroke="#303030"/><rect x="9" y="10.5" width="4" height="3" fill="none" stroke="#303030"/></svg>
<div class="t" style="left:67px;top:176px;font-size:12px;line-height:15px;color:#000;transform:scaleX(0.98);transform-origin:0 0">Get Attribute</div>
<svg style="left:46px;top:193px;" width="16" height="16" viewBox="0 0 16 16"><rect x="0.5" y="0.5" width="15" height="15" fill="#fff" stroke="#303030"/><rect x="1" y="1" width="14" height="3" fill="#60e060"/><rect x="3" y="5.5" width="4" height="3" fill="none" stroke="#303030"/><rect x="9" y="5.5" width="4" height="3" fill="none" stroke="#303030"/><rect x="3" y="10.5" width="4" height="3" fill="none" stroke="#303030"/><rect x="9" y="10.5" width="4" height="3" fill="none" stroke="#303030"/></svg>
<div class="t" style="left:67px;top:195px;font-size:12px;line-height:15px;color:#000;transform:scaleX(0.98);transform-origin:0 0">Get CSS Value</div>
<svg style="left:46px;top:212px;" width="16" height="16" viewBox="0 0 16 16"><rect x="0.5" y="0.5" width="15" height="15" fill="#fff" stroke="#303030"/><rect x="1" y="1" width="14" height="3" fill="#60e060"/><rect x="3" y="5.5" width="4" height="3" fill="none" stroke="#303030"/><rect x="9" y="5.5" width="4" height="3" fill="none" stroke="#303030"/><rect x="3" y="10.5" width="4" height="3" fill="none" stroke="#303030"/><rect x="9" y="10.5" width="4" height="3" fill="none" stroke="#303030"/></svg>
<div class="t" style="left:67px;top:214px;font-size:12px;line-height:15px;color:#000;transform:scaleX(0.98);transform-origin:0 0">Get Location</div>
<svg style="left:46px;top:231px;" width="16" height="16" viewBox="0 0 16 16"><rect x="0.5" y="0.5" width="15" height="15" fill="#fff" stroke="#303030"/><rect x="1" y="1" width="14" height="3" fill="#60e060"/><rect x="3" y="5.5" width="4" height="3" fill="none" stroke="#303030"/><rect x="9" y="5.5" width="4" height="3" fill="none" stroke="#303030"/><rect x="3" y="10.5" width="4" height="3" fill="none" stroke="#303030"/><rect x="9" y="10.5" width="4" height="3" fill="none" stroke="#303030"/></svg>
<div class="t" style="left:67px;top:233px;font-size:12px;line-height:15px;color:#000;transform:scaleX(0.98);transform-origin:0 0">Get Rect</div>
<svg style="left:46px;top:250px;" width="16" height="16" viewBox="0 0 16 16"><rect x="0.5" y="0.5" width="15" height="15" fill="#fff" stroke="#303030"/><rect x="1" y="1" width="14" height="3" fill="#60e060"/><rect x="3" y="5.5" width="4" height="3" fill="none" stroke="#303030"/><rect x="9" y="5.5" width="4" height="3" fill="none" stroke="#303030"/><rect x="3" y="10.5" width="4" height="3" fill="none" stroke="#303030"/><rect x="9" y="10.5" width="4" height="3" fill="none" stroke="#303030"/></svg>
<div class="t" style="left:67px;top:252px;font-size:12px;line-height:15px;color:#000;transform:scaleX(0.98);transform-origin:0 0">Get Size</div>
<svg style="left:46px;top:269px;" width="16" height="16" viewBox="0 0 16 16"><rect x="0.5" y="0.5" width="15" height="15" fill="#fff" stroke="#303030"/><rect x="1" y="1" width="14" height="3" fill="#60e060"/><rect x="3" y="5.5" width="4" height="3" fill="none" stroke="#303030"/><rect x="9" y="5.5" width="4" height="3" fill="none" stroke="#303030"/><rect x="3" y="10.5" width="4" height="3" fill="none" stroke="#303030"/><rect x="9" y="10.5" width="4" height="3" fill="none" stroke="#303030"/></svg>
<div class="t" style="left:67px;top:271px;font-size:12px;line-height:15px;color:#000;transform:scaleX(0.98);transform-origin:0 0">Get Tag Name</div>
</div>
<div style="left:718px;top:145px;width:17px;height:278px;background:#f0f0f0"></div>
<div style="left:719px;top:163px;width:15px;height:148px;background:#cdcdcd"></div>
<svg style="left:723px;top:151px;" width="7" height="4" viewBox="0 0 7 4"><path d="M0 4 L3.5 0 L7 4 Z" fill="#505050"/></svg>
<svg style="left:723px;top:412px;" width="7" height="4" viewBox="0 0 7 4"><path d="M0 0 L7 0 L3.5 4 Z" fill="#505050"/></svg>
<div style="left:436px;top:423px;width:282px;height:16px;background:#f0f0f0"></div>
<div style="left:454px;top:424px;width:237px;height:14px;background:#cdcdcd"></div>
<svg style="left:442px;top:428px;" width="4" height="7" viewBox="0 0 4 7"><path d="M4 0 L4 7 L0 3.5 Z" fill="#505050"/></svg>
<svg style="left:707px;top:428px;" width="4" height="7" viewBox="0 0 4 7"><path d="M0 0 L4 3.5 L0 7 Z" fill="#505050"/></svg>
<div style="left:718px;top:423px;width:17px;height:16px;background:#f0f0f0"></div>
<svg style="left:436px;top:442px;" width="66" height="10" viewBox="0 0 66 10"><rect x="0" y="0" width="66" height="10" fill="#f0f0f0"/><path d="M0.5 9.5 V0.5 H65.5" stroke="#ffffff" fill="none"/><path d="M0.5 9.5 H65.5 V0.5" stroke="#909090" fill="none"/><path d="M16 4 V6 H14" fill="#111" stroke="none"/><rect x="14" y="5" width="2" height="1" fill="#111"/><rect x="15" y="4" width="1" height="1" fill="#111"/><path d="M21 4 V6 H19" fill="#111" stroke="none"/><rect x="19" y="5" width="2" height="1" fill="#111"/><rect x="20" y="4" width="1" height="1" fill="#111"/><path d="M26 4 V6 H24" fill="#111" stroke="none"/><rect x="24" y="5" width="2" height="1" fill="#111"/><rect x="25" y="4" width="1" height="1" fill="#111"/><path d="M31 4 V6 H29" fill="#111" stroke="none"/><rect x="29" y="5" width="2" height="1" fill="#111"/><rect x="30" y="4" width="1" height="1" fill="#111"/><path d="M36 4 V6 H34" fill="#111" stroke="none"/><rect x="34" y="5" width="2" height="1" fill="#111"/><rect x="35" y="4" width="1" height="1" fill="#111"/><path d="M41 4 V6 H39" fill="#111" stroke="none"/><rect x="39" y="5" width="2" height="1" fill="#111"/><rect x="40" y="4" width="1" height="1" fill="#111"/><path d="M46 4 V6 H44" fill="#111" stroke="none"/><rect x="44" y="5" width="2" height="1" fill="#111"/><rect x="45" y="4" width="1" height="1" fill="#111"/><path d="M51 4 V6 H49" fill="#111" stroke="none"/><rect x="49" y="5" width="2" height="1" fill="#111"/><rect x="50" y="4" width="1" height="1" fill="#111"/><path d="M56 4 V6 H54" fill="#111" stroke="none"/><rect x="54" y="5" width="2" height="1" fill="#111"/><rect x="55" y="4" width="1" height="1" fill="#111"/><path d="M3 3 L10.5 3 L6.75 7.5 Z" fill="#000"/><path d="M55.5 3 L63 3 L59.25 7.5 Z" fill="#000"/></svg>
<div class="t" style="left:439px;top:462px;font-size:12px;line-height:15px;color:#4a5ed8">Eigenschaften</div>
<div style="left:435px;top:478px;width:303px;height:301px;box-sizing:border-box;border-top:1px solid #a0a0a0;border-left:1px solid #a0a0a0;border-right:1px solid #fff;border-bottom:1px solid #fff"></div>
<div style="left:436px;top:479px;width:301px;height:282px;background:#fff"></div>
<div style="left:436px;top:479px;width:301px;height:282px;overflow:hidden">
<svg style="left:16px;top:6px;" width="11" height="11" viewBox="0 0 11 11"><defs><radialGradient id="bg6" cx="0.45" cy="0.3" r="0.75"><stop offset="0" stop-color="#d8ffb0"/><stop offset="0.5" stop-color="#70d030"/><stop offset="1" stop-color="#2c8c10"/></radialGradient></defs><circle cx="5.5" cy="5.5" r="5.2" fill="url(#bg6)"/></svg>
<div class="t" style="left:34px;top:4px;font-size:12px;line-height:15px;color:#000">class</div>
<div class="t" style="left:115px;top:4px;font-size:12px;line-height:15px;color:#000">right middle</div>
<svg style="left:16px;top:25px;" width="11" height="11" viewBox="0 0 11 11"><defs><radialGradient id="bg25" cx="0.45" cy="0.3" r="0.75"><stop offset="0" stop-color="#d8ffb0"/><stop offset="0.5" stop-color="#70d030"/><stop offset="1" stop-color="#2c8c10"/></radialGradient></defs><circle cx="5.5" cy="5.5" r="5.2" fill="url(#bg25)"/></svg>
<div class="t" style="left:34px;top:23px;font-size:12px;line-height:15px;color:#000">style</div>
<svg style="left:16px;top:44px;" width="11" height="11" viewBox="0 0 11 11"><defs><radialGradient id="bg44" cx="0.45" cy="0.3" r="0.75"><stop offset="0" stop-color="#d8ffb0"/><stop offset="0.5" stop-color="#70d030"/><stop offset="1" stop-color="#2c8c10"/></radialGradient></defs><circle cx="5.5" cy="5.5" r="5.2" fill="url(#bg44)"/></svg>
<div class="t" style="left:34px;top:42px;font-size:12px;line-height:15px;color:#000">outerHTML</div>
<div class="t" style="left:115px;top:42px;font-size:12px;line-height:15px;color:#000">&lt;th class=&quot;right middle&quot; expeccoid=&quot;12345&quot;&gt;</div>
</div>
<div style="left:436px;top:761px;width:302px;height:17px;background:#f0f0f0"></div>
<div style="left:454px;top:762px;width:113px;height:15px;background:#cdcdcd"></div>
<svg style="left:442px;top:767px;" width="4" height="7" viewBox="0 0 4 7"><path d="M4 0 L4 7 L0 3.5 Z" fill="#505050"/></svg>
<svg style="left:727px;top:767px;" width="4" height="7" viewBox="0 0 4 7"><path d="M0 0 L4 3.5 L0 7 Z" fill="#505050"/></svg>
<svg style="left:740px;top:117px;" width="10" height="66" viewBox="0 0 10 66"><rect x="0" y="0" width="10" height="66" fill="#f0f0f0"/><path d="M0.5 65.5 V0.5 H9.5" stroke="#fff" fill="none"/><path d="M0.5 65.5 H9.5 V0.5" stroke="#909090" fill="none"/><rect x="5" y="13" width="2" height="1" fill="#111"/><rect x="6" y="12" width="1" height="1" fill="#111"/><rect x="5" y="18" width="2" height="1" fill="#111"/><rect x="6" y="17" width="1" height="1" fill="#111"/><rect x="5" y="23" width="2" height="1" fill="#111"/><rect x="6" y="22" width="1" height="1" fill="#111"/><rect x="5" y="28" width="2" height="1" fill="#111"/><rect x="6" y="27" width="1" height="1" fill="#111"/><rect x="5" y="33" width="2" height="1" fill="#111"/><rect x="6" y="32" width="1" height="1" fill="#111"/><rect x="5" y="38" width="2" height="1" fill="#111"/><rect x="6" y="37" width="1" height="1" fill="#111"/><rect x="5" y="43" width="2" height="1" fill="#111"/><rect x="6" y="42" width="1" height="1" fill="#111"/><rect x="5" y="48" width="2" height="1" fill="#111"/><rect x="6" y="47" width="1" height="1" fill="#111"/><rect x="5" y="53" width="2" height="1" fill="#111"/><rect x="6" y="52" width="1" height="1" fill="#111"/><rect x="5" y="58" width="2" height="1" fill="#111"/><rect x="6" y="57" width="1" height="1" fill="#111"/><path d="M7.5 3 L7.5 10.5 L3 6.75 Z" fill="#000"/><path d="M7.5 56 L7.5 63.5 L3 59.75 Z" fill="#000"/></svg>
<div style="left:966px;top:120px;width:263px;height:21px;background:#f7f7f7;box-sizing:border-box;border:1px solid #8c8c8c;border-bottom:none"></div>
<div class="t" style="left:1058px;top:123px;font-size:12px;line-height:15px;color:#000">Arbeitsbereich</div>
<div style="left:1228px;top:120px;width:213px;height:21px;background:#f7f7f7;box-sizing:border-box;border:1px solid #8c8c8c;border-bottom:none"></div>
<div class="t" style="left:1323px;top:123px;font-size:12px;line-height:15px;color:#000">Lauf</div>
<div style="left:966px;top:140px;width:478px;height:1px;background:#8c8c8c"></div>
<div style="left:1443px;top:140px;width:1px;height:639px;background:#8c8c8c"></div>
<div style="left:751px;top:778px;width:693px;height:1px;background:#8c8c8c"></div>
<div style="left:751px;top:117px;width:1px;height:662px;background:#8c8c8c"></div>
<div style="left:752px;top:117px;width:214px;height:24px;background:#f0f0f0"></div>
<div style="left:751px;top:117px;width:216px;height:3px;background:linear-gradient(#ff8a10,#ffc040)"></div>
<div class="t" style="left:848px;top:122px;font-size:12px;line-height:15px;color:#000">Test</div>
<div style="left:753px;top:143px;width:690px;height:30px;box-sizing:border-box;border-top:1px solid #fff;border-left:1px solid #fff;border-bottom:1px solid #a0a0a0;border-right:1px solid #a0a0a0"></div>
<div style="left:788px;top:144px;width:1px;height:28px;background:#a0a0a0"></div>
<div style="left:789px;top:144px;width:1px;height:28px;background:#fff"></div>
<div style="left:1403px;top:144px;width:1px;height:28px;background:#a0a0a0"></div>
<div style="left:1404px;top:144px;width:1px;height:28px;background:#fff"></div>
<svg style="left:759px;top:149px;" width="19" height="18" viewBox="0 0 19 18"><circle cx="7.5" cy="7.5" r="7" fill="#f09090"/><rect x="3" y="6.2" width="9" height="2.6" fill="#fff"/><path d="M13 9 V16 M9.5 12.5 H16.5 M10 17.5 H16" stroke="#e8d890" stroke-width="1.6"/></svg>
<svg style="left:802px;top:150px;" width="11" height="16" viewBox="0 0 11 16"><defs><linearGradient id="gp" x1="0" y1="0" x2="1" y2="0"><stop offset="0" stop-color="#208a20"/><stop offset="1" stop-color="#50c040"/></linearGradient></defs><path d="M0.8 0.8 L10.2 8 L0.8 15.2 Z" fill="url(#gp)" stroke="#106010" stroke-width="0.8"/></svg>
<svg style="left:1414px;top:149px;" width="20" height="18" viewBox="0 0 20 18"><rect x="4.5" y="1.5" width="14" height="15" rx="1.5" fill="#fff" stroke="#303030" stroke-width="1.2"/><rect x="5" y="2" width="13" height="2.2" fill="#404040"/><path d="M10 7.5 H16.5 M10 10 H16.5 M10 12.5 H16.5" stroke="#303030" stroke-width="1.1"/><path d="M0.5 10 H6" stroke="#303030" stroke-width="1.8"/><path d="M5 6.5 L9 10 L5 13.5 Z" fill="#303030"/></svg>
<div style="left:753px;top:173px;width:690px;height:30px;box-sizing:border-box;border-top:1px solid #fff;border-left:1px solid #fff;border-bottom:1px solid #a0a0a0;border-right:1px solid #a0a0a0"></div>
<svg style="left:1421px;top:181px;" width="15" height="15" viewBox="0 0 15 15"><defs><radialGradient id="hg1421" cx="0.4" cy="0.3" r="0.8"><stop offset="0" stop-color="#a8c8ff"/><stop offset="1" stop-color="#3c70e0"/></radialGradient></defs>
<circle cx="7.5" cy="7.5" r="7.0" fill="url(#hg1421)" stroke="#5078d0" stroke-width="0.8"/>
<path d="M5.1000000000000005 5.7 Q5.1000000000000005 3.0 7.5 3.0 Q10.200000000000001 3.0 10.200000000000001 5.7 Q10.200000000000001 7.5 7.5 8.4 L7.5 9.6" stroke="#fff" stroke-width="1.9500000000000002" fill="none"/>
<circle cx="7.5" cy="12.0" r="1.2" fill="#fff"/></svg>
<div style="left:753px;top:204px;width:689px;height:557px;box-sizing:border-box;border-top:1px solid #a0a0a0;border-left:1px solid #a0a0a0"></div>
<div style="left:754px;top:205px;width:671px;height:554px;background:#fff"></div>
<div style="left:1425px;top:205px;width:17px;height:554px;background:#f0f0f0"></div>
<div style="left:1426px;top:220px;width:15px;height:441px;background:#cdcdcd"></div>
<svg style="left:1430px;top:211px;" width="7" height="4" viewBox="0 0 7 4"><path d="M0 4 L3.5 0 L7 4 Z" fill="#505050"/></svg>
<svg style="left:1430px;top:748px;" width="7" height="4" viewBox="0 0 7 4"><path d="M0 0 L7 0 L3.5 4 Z" fill="#505050"/></svg>
<div style="left:754px;top:759px;width:671px;height:17px;background:#f0f0f0"></div>
<div style="left:772px;top:760px;width:517px;height:15px;background:#cdcdcd"></div>
<svg style="left:760px;top:765px;" width="4" height="7" viewBox="0 0 4 7"><path d="M4 0 L4 7 L0 3.5 Z" fill="#505050"/></svg>
<svg style="left:1414px;top:765px;" width="4" height="7" viewBox="0 0 4 7"><path d="M0 0 L4 3.5 L0 7 Z" fill="#505050"/></svg>
<div style="left:1425px;top:759px;width:17px;height:17px;background:#f0f0f0"></div>
<div style="left:432px;top:781px;width:150px;height:28px;background:#f0f0f0;box-sizing:border-box;border:1px solid #000;box-shadow:inset 0 0 0 1px rgba(0,0,0,0.45)"></div>
<div class="t" style="left:464px;top:788px;font-size:12px;line-height:15px;transform:scaleX(1.0020);transform-origin:0 0;color:#000">Pfad überprüfen</div>
<div style="left:587px;top:781px;width:835px;height:28px;background:#fff;box-sizing:border-box;border:1px solid #a8b8f0"></div>
<div style="left:1400px;top:782px;width:21px;height:26px;background:#f0f0f0"></div>
<div style="left:1401px;top:785px;width:1px;height:20px;background:#e4e4e4"></div>
<div style="left:1418px;top:785px;width:1px;height:20px;background:#e4e4e4"></div>
<svg style="left:1407px;top:793px;" width="7" height="4" viewBox="0 0 7 4"><path d="M0 0 L7 0 L3.5 4 Z" fill="#303030"/></svg>
<div class="t" style="left:586px;top:789px;font-size:13.33px;line-height:15px;width:812px;overflow:hidden;font-family:'Liberation Mono',monospace;color:#262626">lass=&quot;titleArea&quot;]/table/tbody/tr/td[@class=&quot;headerColumnWithSelectBox center&quot;]/table/tbody/tr[1]/th</div>
<svg style="left:1427px;top:786px;" width="18" height="18" viewBox="0 0 18 18"><rect x="1.5" y="1.5" width="5" height="6" fill="#fff" stroke="#2c5468" stroke-width="1.1"/><path d="M4 7.5 V11.5 H8" stroke="#2c5468" stroke-width="1.4" fill="none"/><rect x="7.5" y="8.5" width="5.5" height="5" fill="#c8c8c8" stroke="#2c5468" stroke-width="1.1"/><text x="12.5" y="13" font-family="Liberation Sans" font-weight="bold" font-size="11" fill="#2c5468">?</text></svg>
<div style="left:8px;top:814px;width:1439px;height:1px;background:#787878"></div>
<div style="left:8px;top:815px;width:1439px;height:1px;background:#a8a8a8"></div>
<div style="left:9px;top:838px;width:1370px;height:1px;background:#ffffff"></div>
<div style="left:1431px;top:838px;width:16px;height:1px;background:#ffffff"></div>
<div style="left:710px;top:816px;width:1px;height:23px;background:#a0a0a0"></div>
<div style="left:701px;top:816px;width:9px;height:22px;background:#f8f8f8"></div>
<div class="t" style="left:715px;top:821px;font-size:12px;line-height:15px;color:#000">expecco</div>
<div style="left:1379px;top:816px;width:1px;height:23px;background:#909090"></div>
<div style="left:1405px;top:816px;width:1px;height:23px;background:#909090"></div>
<div style="left:1430px;top:816px;width:1px;height:23px;background:#ffffff"></div>
<svg style="left:1384px;top:819px;" width="16" height="16" viewBox="0 0 16 16"><defs><linearGradient id="gb" x1="0" y1="0" x2="0" y2="1"><stop offset="0" stop-color="#ffffff"/><stop offset="0.35" stop-color="#e8e8e8"/><stop offset="0.55" stop-color="#a8a8a8"/><stop offset="1" stop-color="#f0f0f0"/></linearGradient></defs><circle cx="8" cy="8" r="7" fill="url(#gb)" stroke="#b0b0b0" stroke-width="0.7"/></svg>
</body></html>
